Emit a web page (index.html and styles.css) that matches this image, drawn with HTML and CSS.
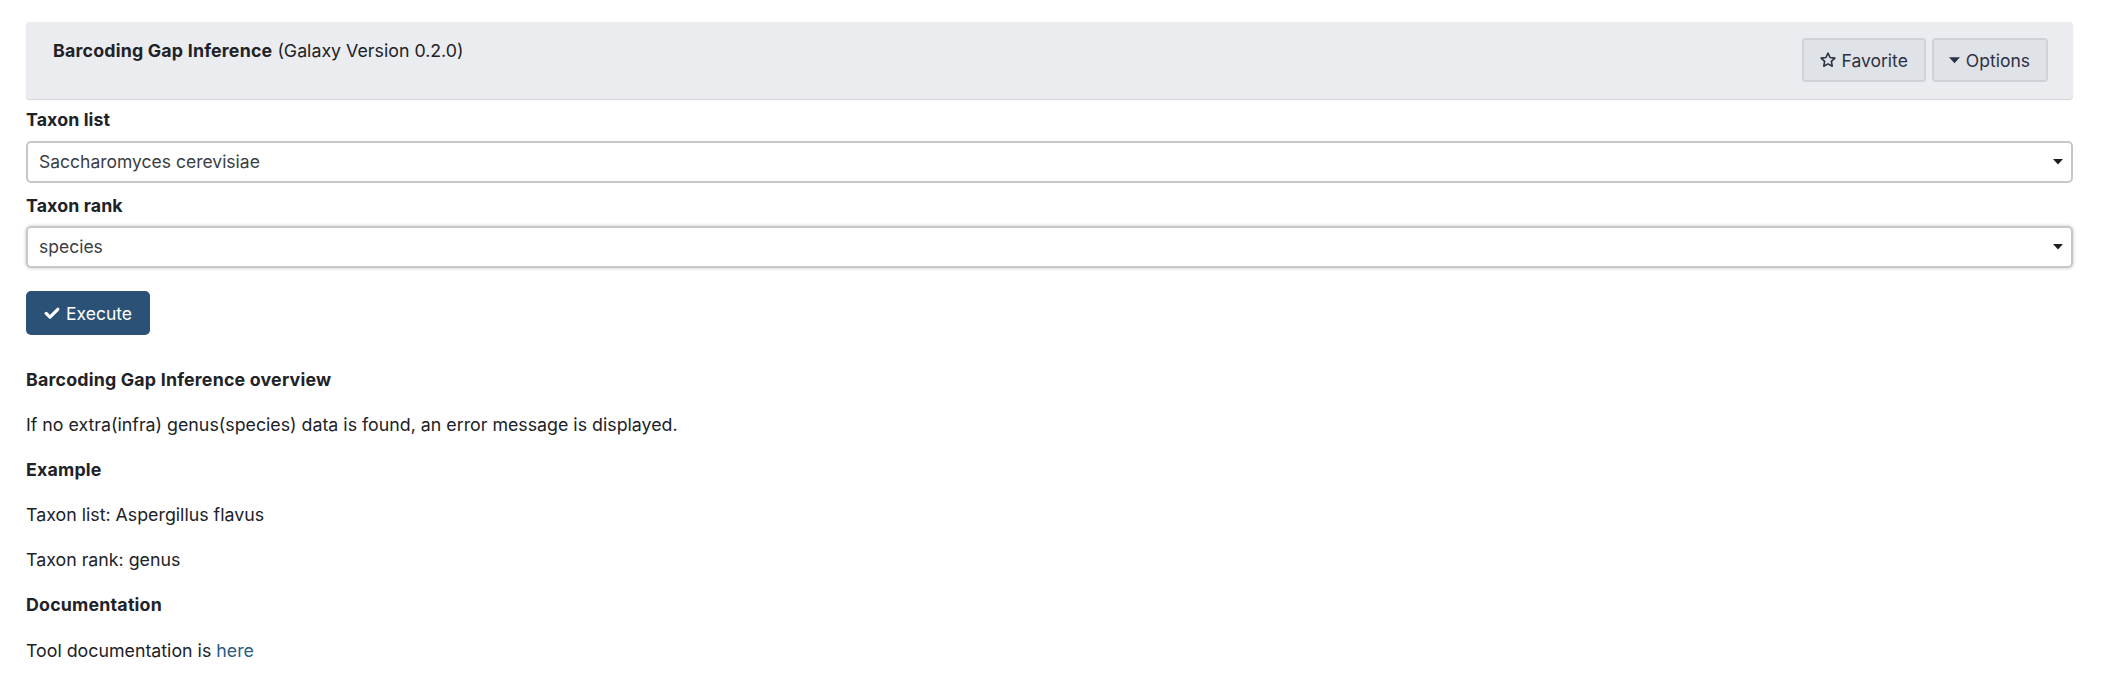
FILE: index.html
```html
<!DOCTYPE html>
<html>
<head>
<meta charset="utf-8">
<link rel="stylesheet" href="styles.css">
</head>
<body>
<div class="page">
  <div class="panel">
    <div class="title"><b>Barcoding Gap Inference</b> (Galaxy Version 0.2.0)</div>
    <div class="actions">
      <button class="btn"><svg class="ico star" viewBox="0 0 24 24"><path d="M12 2.8l2.75 5.9 6.45.78-4.75 4.43 1.24 6.38L12 17.1l-5.69 3.19 1.24-6.38L2.8 9.48l6.45-.78z" fill="none" stroke="#2c3143" stroke-width="2.1" stroke-linejoin="round"/></svg>Favorite</button>
      <button class="btn"><svg class="ico caret" viewBox="0 0 10 6"><path d="M0 0h10L5 5.6z" fill="#2c3143"/></svg>Options</button>
    </div>
  </div>

  <div class="field">
    <div class="label">Taxon list</div>
    <div class="select">
      <span>Saccharomyces cerevisiae</span>
      <svg class="arrow" viewBox="0 0 10 6"><path d="M0 0h10L5 5.6z" fill="#1d1f24"/></svg>
    </div>
  </div>
  <div class="field second">
    <div class="label">Taxon rank</div>
    <div class="select focus">
      <span>species</span>
      <svg class="arrow" viewBox="0 0 10 6"><path d="M0 0h10L5 5.6z" fill="#1d1f24"/></svg>
    </div>
  </div>

  <button class="exec"><svg class="check" viewBox="0 0 16 16"><path d="M2.2 8.4l3.8 3.7L13.8 4.3" fill="none" stroke="#fff" stroke-width="3.2" stroke-linecap="round" stroke-linejoin="round"/></svg>Execute</button>

  <div class="help">
    <p class="h">Barcoding Gap Inference overview</p>
    <p>If no extra(infra) genus(species) data is found, an error message is displayed.</p>
    <p class="h">Example</p>
    <p>Taxon list: Aspergillus flavus</p>
    <p>Taxon rank: genus</p>
    <p class="h">Documentation</p>
    <p>Tool documentation is <a href="#">here</a></p>
  </div>
</div>
</body>
</html>
```

FILE: styles.css
```css
html, body {
  margin: 0;
  padding: 0;
  background: #fff;
}
body {
  font-family: Inter, "Open Sans", sans-serif;
  font-size: 17.8px;
  line-height: 25.5px;
  color: #202227;
}
.page {
  padding: 22px 31px 0 26px;
}
.panel {
  display: flex;
  justify-content: space-between;
  align-items: flex-start;
  background: #ebecef;
  border-radius: 4px;
  box-shadow: 0 1px 1px rgba(0,0,0,0.18);
  height: 77px;
  box-sizing: border-box;
  padding: 16px 25px 0 27px;
}
.title b { font-weight: 700; letter-spacing: 0.2px; }
.actions {
  display: flex;
  gap: 6px;
  margin-top: 0;
}
.btn {
  display: flex;
  align-items: center;
  height: 44px;
  box-sizing: border-box;
  background: #dfe2e7;
  border: 2px solid #cfd2d8;
  border-radius: 4px;
  font-family: inherit;
  font-size: 17.5px;
  color: #2c3143;
  padding: 0 16px 0 15px;
}
.ico { margin-right: 5px; }
.star { width: 18px; height: 18px; }
.caret { width: 11px; height: 7px; margin-right: 6px; }
.field { margin-top: 8px; }
.field.second { margin-top: 10px; }
.label {
  font-weight: 700;
  letter-spacing: 0.1px;
  margin-bottom: 8px;
}
.select {
  display: flex;
  align-items: center;
  justify-content: space-between;
  height: 42px;
  box-sizing: border-box;
  border: 2px solid #c6c7ca;
  border-radius: 5px;
  padding: 0 8px 0 11px;
  font-size: 17.5px;
  color: #3b3d42;
}
.select.focus {
  box-shadow: 0 0 3px 1px rgba(0,0,0,0.15);
}
.arrow { width: 10px; height: 6px; }
.exec {
  display: flex;
  align-items: center;
  margin-top: 23px;
  height: 44px;
  width: 124px;
  box-sizing: border-box;
  background: #2c5177;
  border: none;
  border-radius: 5px;
  color: #fff;
  font-family: inherit;
  font-size: 17.5px;
  padding: 0 0 0 18px;
}
.check { width: 16px; height: 16px; margin-right: 6px; }
.help { margin-top: 32px; }
.help p { margin: 0 0 19.6px 0; }
.help .h { font-weight: 700; letter-spacing: 0.2px; }
.help a { color: #2c5b85; text-decoration: none; }
```
